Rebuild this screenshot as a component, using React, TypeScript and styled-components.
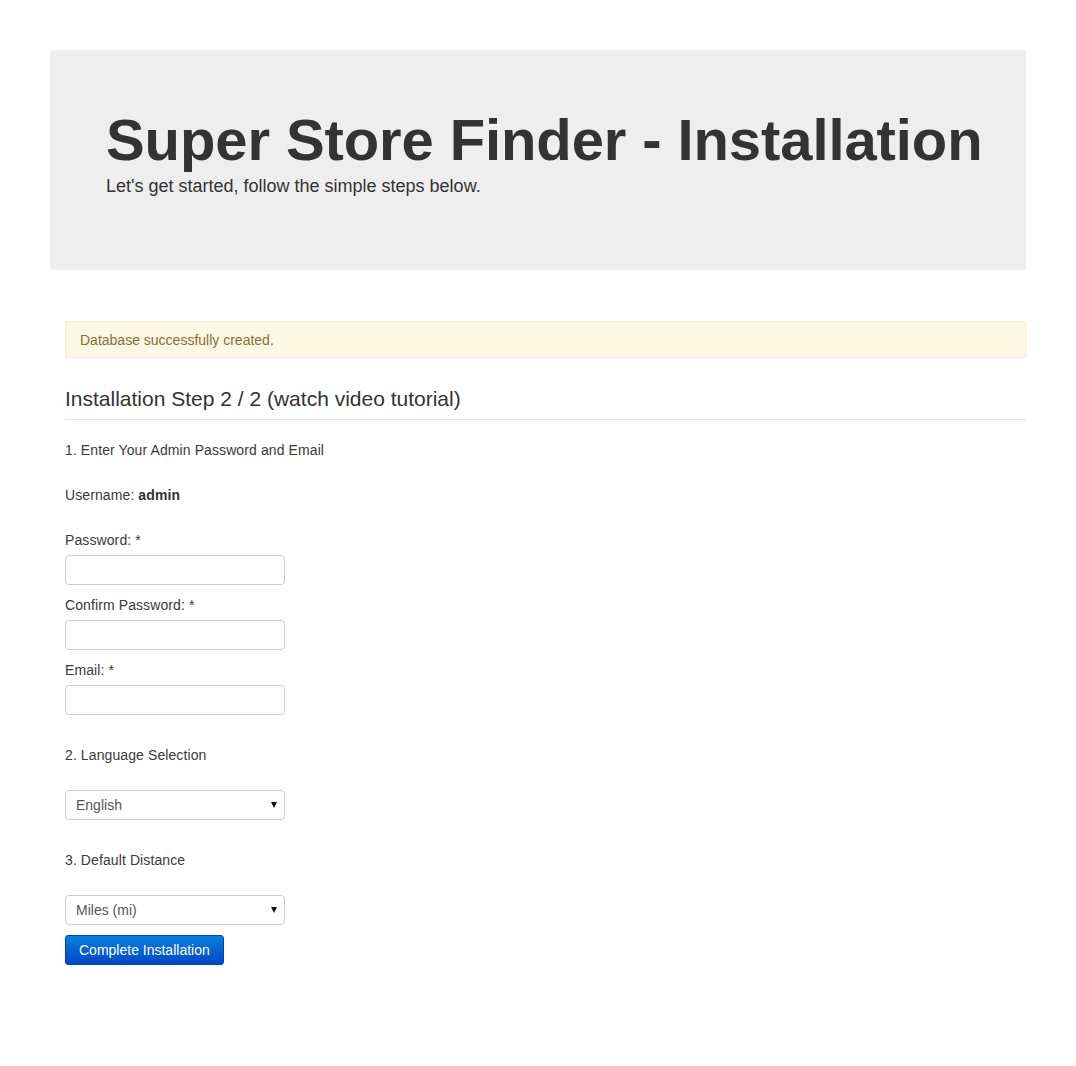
import React from "react";
import styled, { createGlobalStyle } from "styled-components";

const Global = createGlobalStyle`
  html, body { margin: 0; padding: 0; background: #fff; }
  body { font-family: "Liberation Sans", Arial, Helvetica, sans-serif; color: #333; }
  * { box-sizing: border-box; }
`;

const Page = styled.div`
  padding: 50px 50px 80px;
`;

const Jumbotron = styled.header`
  background: #eeeeee;
  height: 220px;
  padding: 58px 30px 0 56px;
`;

const Title = styled.h1`
  margin: 0;
  font-size: 58px;
  font-weight: bold;
  line-height: 64px;
  letter-spacing: -0.1px;
  color: #333;
  white-space: nowrap;
`;

const Lead = styled.p`
  margin: 3px 0 0;
  font-size: 18px;
  line-height: 22px;
  color: #333;
`;

const Content = styled.main`
  padding: 51px 0 0 15px;
`;

const Alert = styled.div`
  background: #fcf8e3;
  border: 1px solid #faebcc;
  border-radius: 2px;
  color: #8a6d3b;
  font-size: 14px;
  line-height: 17px;
  padding: 10px 14px 0;
  height: 37px;
`;

const Heading = styled.h3`
  margin: 28px 0 0;
  padding-bottom: 7px;
  border-bottom: 1px solid #e5e5e5;
  font-size: 21px;
  font-weight: normal;
  line-height: 26px;
  color: #333;
`;

const Text = styled.div<{ $mt: number }>`
  margin-top: ${(p) => p.$mt}px;
  font-size: 14px;
  line-height: 18px;
  letter-spacing: 0.1px;
  color: #3a3a3a;
  b { font-weight: bold; color: #333; }
`;

const Field = styled.input<{ $mt: number }>`
  display: block;
  margin-top: ${(p) => p.$mt}px;
  width: 220px;
  height: 30px;
  border: 1px solid #ccc;
  border-radius: 4px;
  background: #fff;
  padding: 4px 10px;
  font-size: 14px;
`;

const SelectWrap = styled.div<{ $mt: number }>`
  position: relative;
  margin-top: ${(p) => p.$mt}px;
  width: 220px;
  height: 30px;
`;

const Select = styled.select`
  appearance: none;
  -webkit-appearance: none;
  width: 100%;
  height: 100%;
  border: 1px solid #ccc;
  border-radius: 4px;
  background: #fff;
  padding: 0 10px;
  font-family: "Liberation Sans", Arial, sans-serif;
  font-size: 14px;
  color: #555;
`;

const Caret = styled.span`
  position: absolute;
  right: 8px;
  top: 12px;
  width: 0;
  height: 0;
  border-left: 3.5px solid transparent;
  border-right: 3.5px solid transparent;
  border-top: 6px solid #111;
  pointer-events: none;
`;

const Button = styled.button`
  display: block;
  margin-top: 10px;
  height: 30px;
  padding: 0 13px;
  border: 1px solid #0044bb;
  border-radius: 3px;
  background: linear-gradient(to bottom, #0a80dc, #0048c6);
  color: #fff;
  font-family: "Liberation Sans", Arial, sans-serif;
  font-size: 14px;
  line-height: 28px;
`;

export default function App() {
  return (
    <>
      <Global />
      <Page>
        <Jumbotron>
          <Title>Super Store Finder - Installation</Title>
          <Lead>Let's get started, follow the simple steps below.</Lead>
        </Jumbotron>
        <Content>
          <Alert>Database successfully created.</Alert>
          <Heading>Installation Step 2 / 2 (watch video tutorial)</Heading>
          <Text $mt={21}>1. Enter Your Admin Password and Email</Text>
          <Text $mt={27}>
            Username: <b>admin</b>
          </Text>
          <Text $mt={27}>Password: *</Text>
          <Field $mt={6} type="password" />
          <Text $mt={11}>Confirm Password: *</Text>
          <Field $mt={6} type="password" />
          <Text $mt={11}>Email: *</Text>
          <Field $mt={6} type="text" />
          <Text $mt={31}>2. Language Selection</Text>
          <SelectWrap $mt={26}>
            <Select defaultValue="en">
              <option value="en">English</option>
            </Select>
            <Caret />
          </SelectWrap>
          <Text $mt={31}>3. Default Distance</Text>
          <SelectWrap $mt={26}>
            <Select defaultValue="mi">
              <option value="mi">Miles (mi)</option>
              <option value="km">Kilometers (km)</option>
            </Select>
            <Caret />
          </SelectWrap>
          <Button>Complete Installation</Button>
        </Content>
      </Page>
    </>
  );
}
